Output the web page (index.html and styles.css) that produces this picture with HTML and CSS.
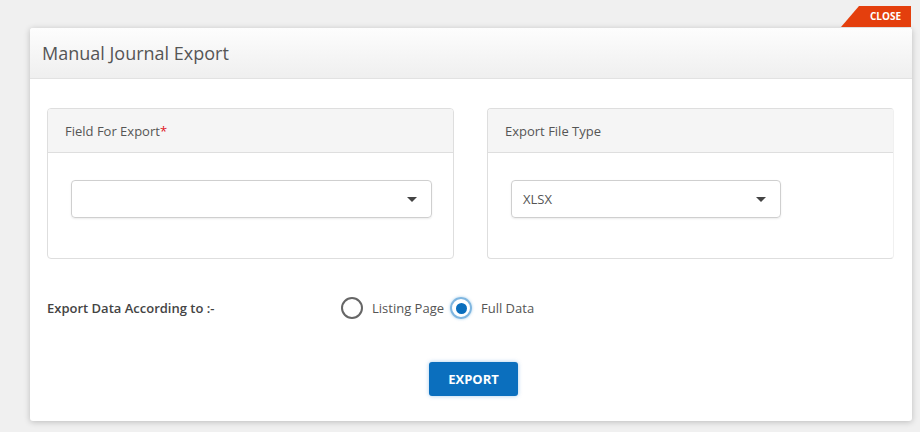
FILE: index.html
```html
<!DOCTYPE html>
<html>
<head>
<meta charset="utf-8">
<link rel="stylesheet" href="styles.css">
</head>
<body>
<div class="page">
  <div class="modal">
    <a class="close-tab">CLOSE</a>
    <div class="modal-header">Manual Journal Export</div>
    <div class="modal-body">
      <div class="panels">
        <div class="panel">
          <div class="panel-head">Field For Export<span class="req">*</span></div>
          <div class="panel-body">
            <div class="select select-wide"><span class="value"></span><span class="caret"></span></div>
          </div>
        </div>
        <div class="panel">
          <div class="panel-head">Export File Type</div>
          <div class="panel-body">
            <div class="select select-narrow"><span class="value">XLSX</span><span class="caret"></span></div>
          </div>
        </div>
      </div>
      <div class="radio-row">
        <div class="radio-label">Export Data According to :-</div>
        <div class="radios">
          <span class="radio"></span><span class="radio-text">Listing Page</span>
          <span class="radio checked"></span><span class="radio-text">Full Data</span>
        </div>
      </div>
      <div class="actions">
        <button class="btn">EXPORT</button>
      </div>
    </div>
  </div>
</div>
</body>
</html>
```
FILE: styles.css
```css
* { box-sizing: border-box; }
html, body { margin: 0; padding: 0; }
body {
  width: 920px;
  height: 432px;
  overflow: hidden;
  background: #f0f0f0;
  font-family: "Open Sans", "Noto Sans", sans-serif;
  color: #555;
}
.page {
  padding: 28px 8px 0 30px;
}
.modal {
  position: relative;
  width: 882px;
  height: 393px;
  background: #fff;
  border-radius: 3px;
  box-shadow: 0 1px 6px rgba(0,0,0,0.22);
}
.close-tab {
  position: absolute;
  right: 1px;
  top: -22px;
  width: 70px;
  height: 21px;
  background: #e43f0d;
  color: #fff;
  font-size: 10px;
  font-weight: 700;
  line-height: 21px;
  text-align: right;
  padding-right: 10px;
  clip-path: polygon(18px 0, 100% 0, 100% 100%, 0 100%);
}
.modal-header {
  height: 51px;
  padding: 0 12px;
  display: flex;
  align-items: center;
  font-size: 18px;
  color: #555;
  background: linear-gradient(#fdfdfd, #efefef);
  border-bottom: 1px solid #e2e2e2;
  border-radius: 3px 3px 0 0;
}
.modal-body {
  padding: 29px 18px 0 17px;
}
.panels {
  display: flex;
  gap: 33px;
}
.panel {
  width: 407px;
  height: 151px;
  border: 1px solid #dedede;
  border-radius: 4px;
  overflow: hidden;
}
.panel:last-child { border-right-color: #f0f0f0; }
.panel-head {
  height: 44px;
  background: #f5f5f5;
  border-bottom: 1px solid #dedede;
  display: flex;
  align-items: center;
  padding-left: 17px;
  font-size: 13px;
  color: #555;
}
.req { color: #e0161e; }
.panel-body {
  padding: 27px 0 0 23px;
}
.select {
  height: 38px;
  border: 1px solid #cfcfcf;
  border-radius: 4px;
  box-shadow: 0 1px 2px rgba(0,0,0,0.08);
  display: flex;
  align-items: center;
  justify-content: space-between;
  padding: 0 14px 0 11px;
  font-size: 13px;
  color: #555;
}
.select-wide { width: 361px; }
.select-narrow { width: 270px; }
.caret {
  width: 0;
  height: 0;
  border-left: 5px solid transparent;
  border-right: 5px solid transparent;
  border-top: 5px solid #444;
}
.radio-row {
  display: flex;
  align-items: center;
  height: 26px;
  margin-top: 36px;
}
.radio-label {
  width: 294px;
  font-size: 13px;
  font-weight: 600;
  color: #444;
}
.radios {
  display: flex;
  align-items: center;
  font-size: 13px;
  color: #555;
}
.radio {
  width: 22px;
  height: 22px;
  border: 2px solid #666;
  border-radius: 50%;
  margin-right: 9px;
  display: flex;
  align-items: center;
  justify-content: center;
}
.radio.checked {
  border-color: #7fb6e0;
  box-shadow: 0 0 3px rgba(0,120,200,0.35);
}
.radio.checked::after {
  content: "";
  width: 11px;
  height: 11px;
  border-radius: 50%;
  background: #0a6ebd;
}
.radio-text { margin-right: 6px; }
.actions {
  display: flex;
  justify-content: center;
  margin-top: 41px;
  padding-left: 6px;
}
.btn {
  width: 89px;
  height: 34px;
  background: #0b6fbe;
  border: none;
  border-radius: 3px;
  color: #fff;
  font-family: "Open Sans", sans-serif;
  font-size: 13px;
  font-weight: 700;
  box-shadow: 0 0 4px rgba(0,110,200,0.35);
}
```
